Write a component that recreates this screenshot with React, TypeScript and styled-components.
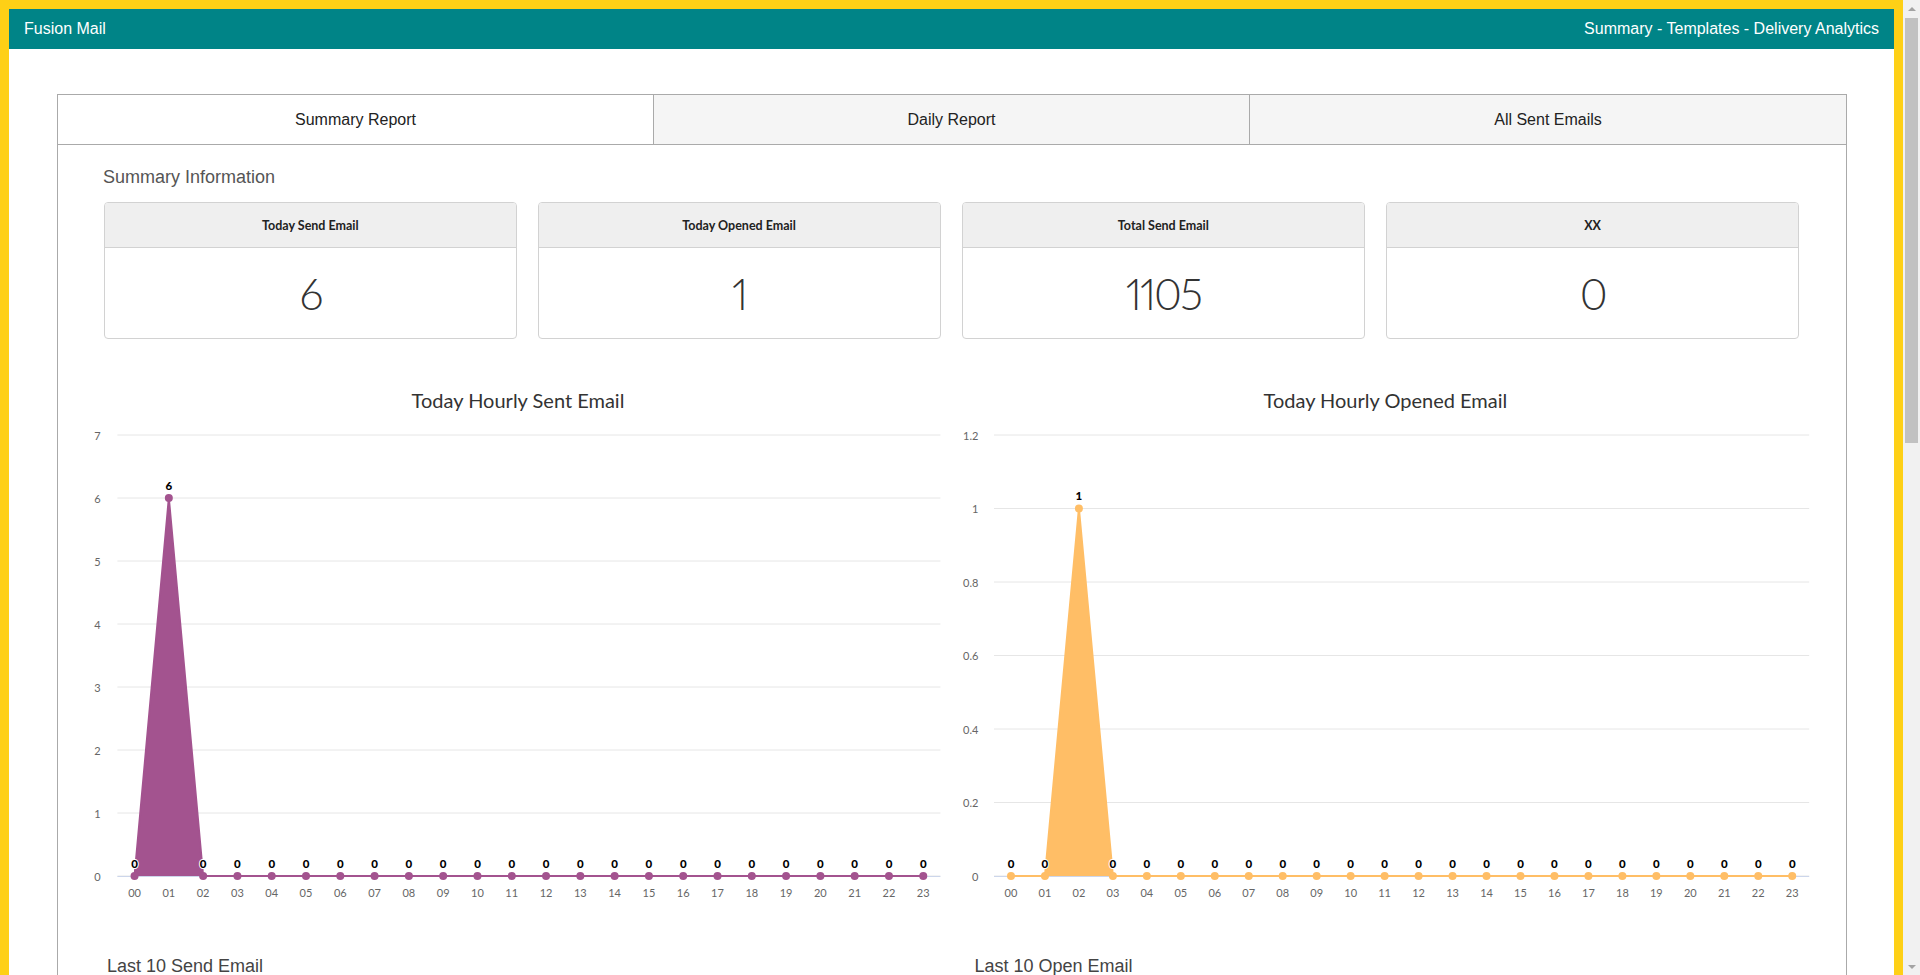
import React from "react";
import styled, { createGlobalStyle } from "styled-components";

const GlobalStyle = createGlobalStyle`
  html { background: #fed016; }
  body { margin: 0; padding-right: 17px; font-family: "Liberation Sans", Arial, sans-serif; }
  #root { padding: 9px; }
`;

const Page = styled.div`
  background: #ffffff;
  min-height: 2142px;
`;

const TopBar = styled.header`
  height: 40px;
  background: #008487;
  color: #ffffff;
  display: flex;
  align-items: center;
  justify-content: space-between;
  padding: 0 15px;
  font-size: 16px;
`;

const Brand = styled.div``;
const NavLinks = styled.nav``;

const Main = styled.main`
  padding-top: 45px;
  padding-bottom: 40px;
`;

const Panel = styled.section`
  margin: 0 47px 0 48px;
  border: 1px solid #aaaaaa;
`;

const Tabs = styled.div`
  display: grid;
  grid-template-columns: 1fr 1fr 1fr;
`;

const Tab = styled.div<{ $active?: boolean }>`
  height: 50px;
  box-sizing: border-box;
  display: flex;
  align-items: center;
  justify-content: center;
  font-size: 16px;
  color: #222222;
  background: ${(p) => (p.$active ? "#ffffff" : "#f5f5f5")};
  border-bottom: 1px solid #aaaaaa;
  border-right: 1px solid #aaaaaa;
  &:last-child { border-right: none; }
`;

const Content = styled.div`
  padding: 0 47px 40px 46px;
`;

const SectionTitle = styled.h2`
  margin: 22px 0 14px -1px;
  font-size: 18px;
  line-height: 21px;
  font-weight: normal;
  color: #555555;
`;

const Cards = styled.div`
  display: grid;
  grid-template-columns: 413fr 403fr 404fr 413fr;
  gap: 21px;
`;

const Card = styled.div`
  border: 1px solid #d2d2d2;
  border-radius: 4px;
  overflow: hidden;
`;

const CardHead = styled.div`
  height: 44px;
  background: #efefef;
  border-bottom: 1px solid #d2d2d2;
  display: flex;
  align-items: center;
  justify-content: center;
  font-family: Lato, "Open Sans", sans-serif;
  font-weight: 700;
  font-size: 12.5px;
  color: #222222;
`;

const CardValue = styled.div`
  height: 90px;
  display: flex;
  align-items: center;
  justify-content: center;
  font-family: Lato, "Open Sans", sans-serif;
  font-weight: 300;
  font-variant-numeric: proportional-nums;
  font-size: 43px;
  letter-spacing: -2px;
  color: #333333;
`;

const ChartRow = styled.div`
  display: flex;
  justify-content: space-between;
  margin: 41px -10px 0 -14px;
`;

const ChartSvg = styled.svg`
  display: block;
  flex: none;
  font-family: Lato, "Open Sans", sans-serif;
`;

const ChartTitle = styled.text`
  font-size: 20px;
  fill: #333333;
`;

const AxisLabel = styled.text`
  font-size: 11px;
  fill: #666666;
`;

const DataLabel = styled.text`
  font-size: 11.5px;
  font-weight: 900;
  fill: #000000;
  stroke: #ffffff;
  stroke-width: 2px;
  paint-order: stroke;
  stroke-linejoin: round;
`;

const LastGrid = styled.div`
  display: grid;
  grid-template-columns: 1fr 1fr;
  gap: 40px;
  margin-top: 46px;
`;

const LastTitle = styled.h3`
  margin: 0 0 14px;
  padding-left: 3px;
  font-size: 18px;
  line-height: 21px;
  font-weight: normal;
  color: #444444;
`;

const Table = styled.table`
  width: 100%;
  border-collapse: collapse;
  font-size: 14px;
  color: #333333;
`;

const Th = styled.th`
  text-align: left;
  padding: 12px 10px;
  background: #f5f5f5;
  border-bottom: 1px solid #dddddd;
  font-weight: bold;
`;

const Td = styled.td`
  padding: 12px 10px;
  border-bottom: 1px solid #eeeeee;
`;

/* Browser scrollbar drawn over the right edge of the window */
const ScrollBar = styled.div`
  position: fixed;
  top: 0;
  right: 0;
  width: 17px;
  height: 100vh;
  background: #f1f1f1;
  display: flex;
  flex-direction: column;
`;

const ScrollButton = styled.div<{ $down?: boolean }>`
  height: 17px;
  flex: none;
  display: flex;
  align-items: center;
  justify-content: center;
  &::before {
    content: "";
    width: 0;
    height: 0;
    border-left: 4px solid transparent;
    border-right: 4px solid transparent;
    ${(p) => (p.$down ? "border-top: 4px solid #a3a3a3;" : "border-bottom: 4px solid #a3a3a3;")}
  }
`;

const ScrollTrack = styled.div`
  flex: 1;
  padding: 1px 2px 0;
`;

const ScrollThumb = styled.div`
  height: 425px;
  background: #c1c1c1;
`;

const hours = Array.from({ length: 24 }, (_, i) => String(i).padStart(2, "0"));

type ChartProps = {
  title: string;
  titleX: number;
  data: number[];
  max: number;
  steps: number;
  color: string;
  labelRight: number;
  x0: number;
  x1: number;
};

function HourChart({ title, titleX, data, max, steps, color, labelRight, x0, x1 }: ChartProps) {
  const top = 55;
  const bottom = 496;
  const w = (x1 - x0) / 24;
  const px = (i: number) => x0 + (i + 0.5) * w;
  const py = (v: number) => bottom - (v / max) * (bottom - top);
  const ticks = Array.from({ length: steps + 1 }, (_, k) => (k * max) / steps);
  const pts = data.map((v, i) => [px(i), py(v)] as const);
  const line = pts.map((p, i) => `${i ? "L" : "M"}${p[0]},${p[1]}`).join(" ");
  const area = `${line} L${px(23)},${bottom} L${px(0)},${bottom} Z`;
  return (
    <ChartSvg width={860} height={530} viewBox="0 0 860 530">
      <ChartTitle x={titleX} y={20} textAnchor="middle" dominantBaseline="central">
        {title}
      </ChartTitle>
      {ticks.map((t) => (
        <g key={t}>
          <line x1={x0} x2={x1} y1={py(t)} y2={py(t)} stroke="#e6e6e6" strokeWidth={1} />
          <AxisLabel x={labelRight} y={py(t)} textAnchor="end" dominantBaseline="central">
            {String(Number(t.toFixed(1)))}
          </AxisLabel>
        </g>
      ))}
      <line x1={x0} x2={x1} y1={bottom + 0.5} y2={bottom + 0.5} stroke="#ccd6eb" strokeWidth={1} />
      {hours.map((h, i) => (
        <AxisLabel key={h} x={px(i)} y={512} textAnchor="middle" dominantBaseline="central">
          {h}
        </AxisLabel>
      ))}
      <path d={area} fill={color} />
      <path d={line} fill="none" stroke={color} strokeWidth={2} />
      {pts.map((p, i) => (
        <circle key={i} cx={p[0]} cy={p[1]} r={4} fill={color} />
      ))}
      {pts.map((p, i) => (
        <DataLabel key={i} x={p[0]} y={p[1] - 13} textAnchor="middle" dominantBaseline="central">
          {data[i]}
        </DataLabel>
      ))}
    </ChartSvg>
  );
}

const sent = hours.map((_, i) => (i === 1 ? 6 : 0));
const opened = hours.map((_, i) => (i === 2 ? 1 : 0));

const cards = [
  { title: "Today Send Email", value: "6" },
  { title: "Today Opened Email", value: "1" },
  { title: "Total Send Email", value: "1105" },
  { title: "XX", value: "0" },
];

const rows = Array.from({ length: 10 }, (_, i) => ({
  to: `user${i + 1}@example.com`,
  subject: "Newsletter",
  time: `01:${String(50 - i * 3).padStart(2, "0")}`,
}));

function LastTable() {
  return (
    <Table>
      <thead>
        <tr>
          <Th>To</Th>
          <Th>Subject</Th>
          <Th>Time</Th>
        </tr>
      </thead>
      <tbody>
        {rows.map((r) => (
          <tr key={r.to}>
            <Td>{r.to}</Td>
            <Td>{r.subject}</Td>
            <Td>{r.time}</Td>
          </tr>
        ))}
      </tbody>
    </Table>
  );
}

export default function App() {
  return (
    <>
      <GlobalStyle />
      <Page>
        <TopBar>
          <Brand>Fusion Mail</Brand>
          <NavLinks>Summary - Templates - Delivery Analytics</NavLinks>
        </TopBar>
        <Main>
          <Panel>
            <Tabs>
              <Tab $active>Summary Report</Tab>
              <Tab>Daily Report</Tab>
              <Tab>All Sent Emails</Tab>
            </Tabs>
            <Content>
              <SectionTitle>Summary Information</SectionTitle>
              <Cards>
                {cards.map((c) => (
                  <Card key={c.title}>
                    <CardHead>{c.title}</CardHead>
                    <CardValue>{c.value}</CardValue>
                  </Card>
                ))}
              </Cards>
              <ChartRow>
                <HourChart
                  title="Today Hourly Sent Email"
                  titleX={428}
                  data={sent}
                  max={7}
                  steps={7}
                  color="#a3538f"
                  labelRight={10.6}
                  x0={27.4}
                  x1={850.4}
                />
                <HourChart
                  title="Today Hourly Opened Email"
                  titleX={435.4}
                  data={opened}
                  max={1.2}
                  steps={6}
                  color="#ffbe66"
                  labelRight={28.4}
                  x0={44}
                  x1={859.2}
                />
              </ChartRow>
              <LastGrid>
                <div>
                  <LastTitle>Last 10 Send Email</LastTitle>
                  <LastTable />
                </div>
                <div>
                  <LastTitle>Last 10 Open Email</LastTitle>
                  <LastTable />
                </div>
              </LastGrid>
            </Content>
          </Panel>
        </Main>
      </Page>
      <ScrollBar>
        <ScrollButton />
        <ScrollTrack>
          <ScrollThumb />
        </ScrollTrack>
        <ScrollButton $down />
      </ScrollBar>
    </>
  );
}
